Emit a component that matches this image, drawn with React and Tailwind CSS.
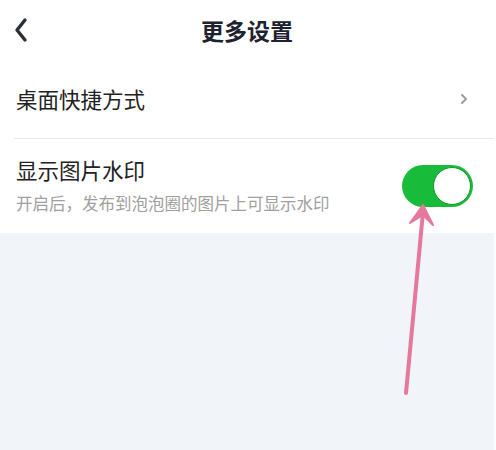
import React from 'react';

const font = { fontFamily: '"Noto Sans CJK SC", "Noto Sans", sans-serif' };

const App = () => {
  return (
    <div className="relative w-[496px] h-[450px] bg-white overflow-hidden" style={font}>
      <div className="w-[494px] h-full flex flex-col bg-[#f1f4f9]">
        {/* Header */}
        <div className="bg-white h-[60px] flex items-center relative">
          <svg className="absolute left-[12px] top-[17px]" width="18" height="26" viewBox="0 0 18 26">
            <path d="M13 3 L5 13 L13 23" fill="none" stroke="#2b2f38" strokeWidth="3.4" strokeLinecap="round" strokeLinejoin="round" />
          </svg>
          <div className="w-full text-center text-[23px] font-bold text-[#1c2230] leading-none pt-[1px]">更多设置</div>
        </div>

        {/* Rows */}
        <div className="bg-white">
          <div className="h-[78px] flex items-center justify-between pl-[16px] pr-[26px]">
            <span className="text-[21.5px] text-[#222222] leading-none">桌面快捷方式</span>
            <svg width="8" height="12" viewBox="0 0 8 12">
              <path d="M2 2 L6 6 L2 10" fill="none" stroke="#9a9da3" strokeWidth="2" strokeLinecap="round" strokeLinejoin="round" />
            </svg>
          </div>
          <div className="ml-[14px] h-px bg-[#e8e9ec]" />
          <div className="h-[94px] flex items-center justify-between pl-[16px] pr-[21px]">
            <div className="flex flex-col gap-[14px] pb-[2px]">
              <span className="text-[21.5px] text-[#222222] leading-none">显示图片水印</span>
              <span className="text-[16.5px] text-[#a0a0a0] leading-none">开启后，发布到泡泡圈的图片上可显示水印</span>
            </div>
            <div className="w-[71px] h-[42px] rounded-full bg-[#19bb3a] flex items-center justify-end pr-[2px]">
              <div className="w-[38px] h-[38px] rounded-full bg-white border border-[#129a2c]" />
            </div>
          </div>
        </div>
      </div>

      {/* Annotation arrow */}
      <svg className="absolute left-0 top-0 pointer-events-none" width="496" height="450" viewBox="0 0 496 450">
        <line x1="406" y1="393" x2="423" y2="212" stroke="#e5789b" strokeWidth="4" strokeLinecap="round" />
        <path d="M423 205 L410 223 L423 215 L433 225 Z" fill="#e5789b" stroke="#e5789b" strokeWidth="2" strokeLinejoin="round" />
      </svg>
    </div>
  );
};

export default App;
